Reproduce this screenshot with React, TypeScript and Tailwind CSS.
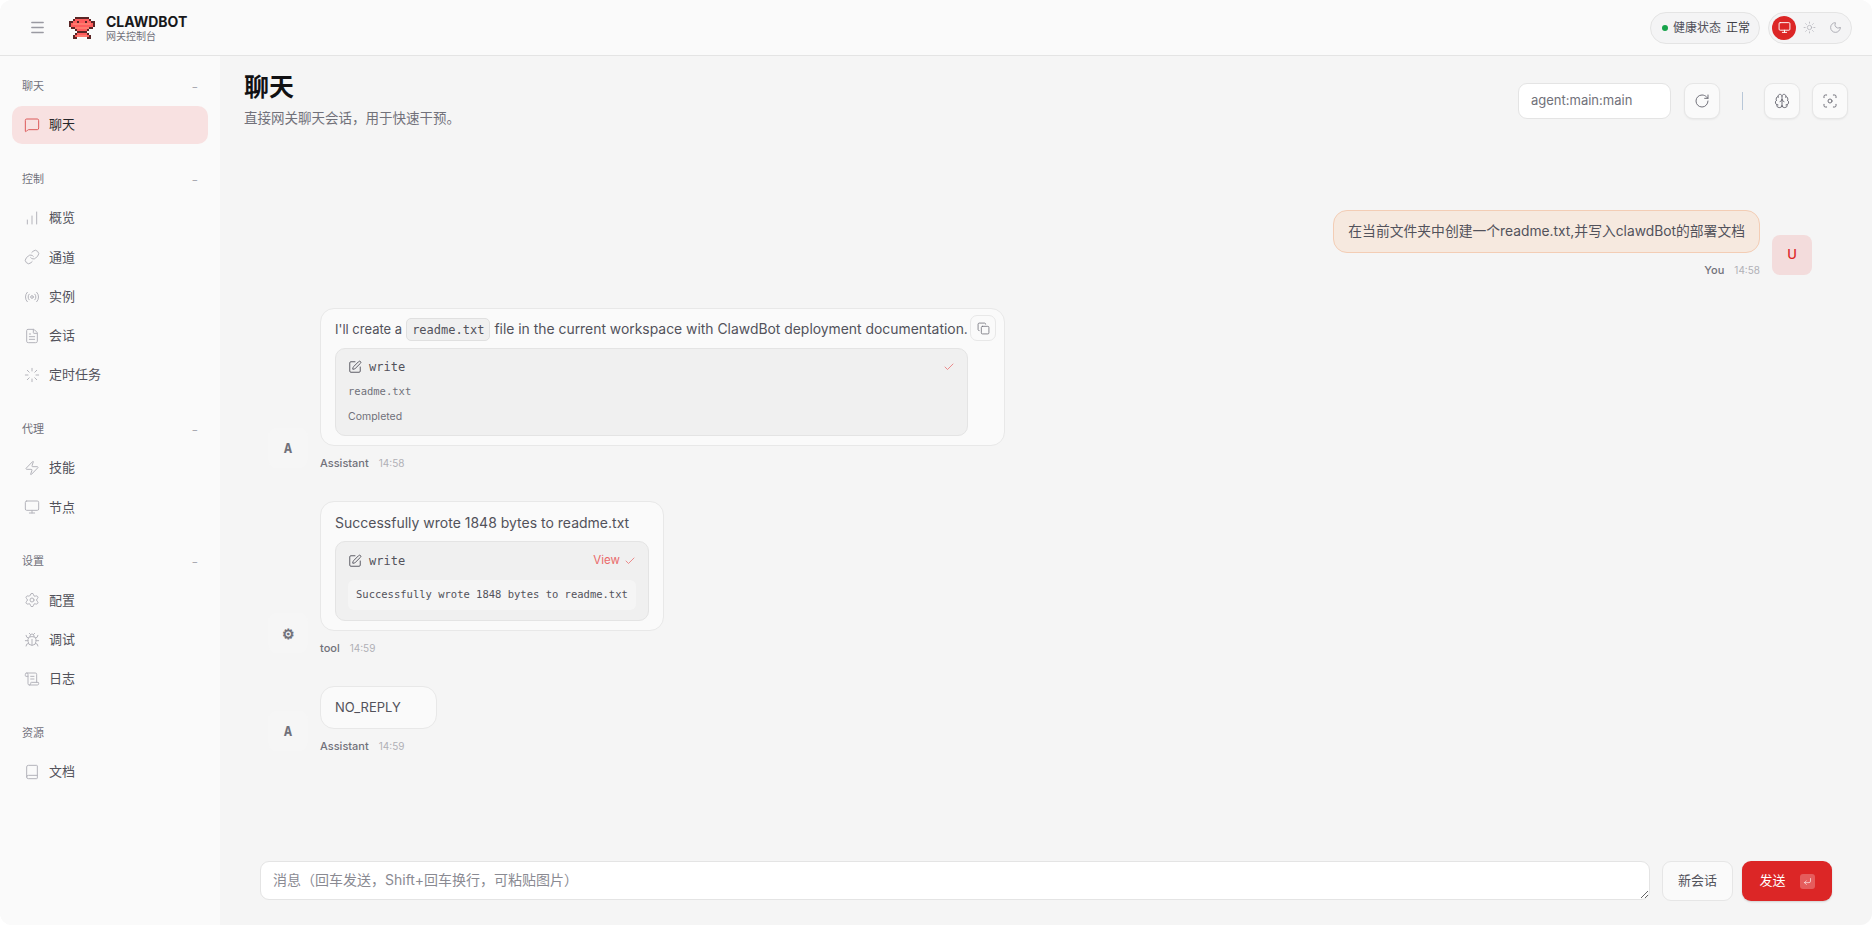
import {
  Book,
  Brain,
  Bug,
  ChartNoAxesColumnIncreasing,
  Check,
  Copy,
  CornerDownLeft,
  FileText,
  Focus,
  Link,
  Loader,
  Menu,
  MessageSquare,
  Monitor,
  Moon,
  Radio,
  RotateCw,
  ScrollText,
  Settings,
  SquarePen,
  Sun,
  Zap,
  type LucideIcon,
} from "lucide-react";
import type { ReactNode } from "react";

const SANS = "font-['Inter','Noto_Sans_CJK_SC',sans-serif]";
const MONO = "font-['DejaVu_Sans_Mono','Noto_Sans_CJK_SC',monospace]";

type NavGroup = {
  label: string;
  collapsible: boolean;
  items: { label: string; icon: LucideIcon; active?: boolean }[];
};

const NAV: NavGroup[] = [
  {
    label: "聊天",
    collapsible: true,
    items: [{ label: "聊天", icon: MessageSquare, active: true }],
  },
  {
    label: "控制",
    collapsible: true,
    items: [
      { label: "概览", icon: ChartNoAxesColumnIncreasing },
      { label: "通道", icon: Link },
      { label: "实例", icon: Radio },
      { label: "会话", icon: FileText },
      { label: "定时任务", icon: Loader },
    ],
  },
  {
    label: "代理",
    collapsible: true,
    items: [
      { label: "技能", icon: Zap },
      { label: "节点", icon: Monitor },
    ],
  },
  {
    label: "设置",
    collapsible: true,
    items: [
      { label: "配置", icon: Settings },
      { label: "调试", icon: Bug },
      { label: "日志", icon: ScrollText },
    ],
  },
  {
    label: "资源",
    collapsible: false,
    items: [{ label: "文档", icon: Book }],
  },
];

// pixel art mascot: d = outline, r = body, l = highlight, e = eye
const LOGO_ROWS = [
  "...ddddddd...",
  "..drrrrrrrd..",
  "ddrrerrrerrdd",
  "drlllllllllrd",
  "drrrrrrrrrrrd",
  ".ddllllllldd.",
  "...drrrrrd...",
  "....ddddd....",
  "...drrrrrd...",
  "..drlllllrd..",
  "..dd.....dd..",
];

const LOGO_COLOR: Record<string, string> = {
  d: "#5a2626",
  r: "#ff5c5c",
  l: "#ff7a6e",
  e: "#5a2626",
};

function Logo() {
  return (
    <svg width="26" height="24" viewBox="0 0 13 11" shapeRendering="crispEdges">
      {LOGO_ROWS.flatMap((row, y) =>
        row.split("").map((c, x) =>
          c === "." ? null : <rect key={`${x}-${y}`} x={x} y={y} width="1" height="1" fill={LOGO_COLOR[c]} />,
        ),
      )}
    </svg>
  );
}

function TopBar() {
  return (
    <header className="flex h-[56px] shrink-0 items-center border-b border-[#e4e4e4] bg-[#fafafa] pl-[29px] pr-[20px]">
      <Menu size={17} strokeWidth={2} className="text-[#9a9aa2]" />
      <div className="ml-[23px]">
        <Logo />
      </div>
      <div className="ml-[11px] flex flex-col">
        <span className="text-[14px] font-bold leading-[17px] text-[#18181b]">CLAWDBOT</span>
        <span className="text-[10px] leading-[12px] text-[#71717a]">网关控制台</span>
      </div>
      <div className="ml-auto flex items-center gap-[8px]">
        <div className="flex h-[32px] w-[110px] items-center rounded-full border border-[#e4e4e4] bg-[#f4f4f5] pl-[11px]">
          <span className="h-[6px] w-[6px] rounded-full bg-[#16a34a]" />
          <span className="ml-[5px] text-[12px] text-[#52525b]">健康状态</span>
          <span className="ml-[5px] text-[12px] text-[#3f3f46]">正常</span>
        </div>
        <div className="flex h-[32px] w-[84px] items-center rounded-full border border-[#e4e4e4] bg-[#f4f4f5] pl-[3px]">
          <span className="flex h-[24px] w-[24px] items-center justify-center rounded-full bg-[#dc2626] text-white">
            <Monitor size={13} strokeWidth={1.75} />
          </span>
          <Sun size={13} strokeWidth={1.5} className="ml-[7px] text-[#b4b4bb]" />
          <Moon size={13} strokeWidth={1.5} className="ml-[13px] text-[#a1a1aa]" />
        </div>
      </div>
    </header>
  );
}

function Sidebar() {
  return (
    <aside className="flex w-[220px] shrink-0 flex-col bg-[#fafafa] pl-[12px] pr-[12px] pt-[21px]">
      {NAV.map((group) => (
        <section key={group.label} className="mb-[26px]">
          <div className="mb-[11px] flex h-[18px] items-center justify-between pl-[10px] pr-[10px]">
            <span className="text-[11px] text-[#71717a]">{group.label}</span>
            {group.collapsible && <span className="text-[10px] text-[#a1a1aa]">−</span>}
          </div>
          <nav className="flex flex-col gap-[1.25px]">
            {group.items.map((item) => {
              const Icon = item.icon;
              return (
                <div
                  key={item.label}
                  className={
                    item.active
                      ? "flex h-[38px] items-center gap-[9px] rounded-[10px] bg-[#f8e1e1] pl-[12px] text-[#27272a]"
                      : "flex h-[38px] items-center gap-[9px] rounded-[10px] pl-[12px] text-[#52525b]"
                  }
                >
                  <Icon
                    size={16}
                    strokeWidth={1.5}
                    className={item.active ? "text-[#dc5a5a]" : "text-[#b4b4bb]"}
                  />
                  <span className="text-[13px]">{item.label}</span>
                </div>
              );
            })}
          </nav>
        </section>
      ))}
    </aside>
  );
}

function IconButton({ icon: Icon }: { icon: LucideIcon }) {
  return (
    <button
      type="button"
      className="flex h-[36px] w-[36px] items-center justify-center rounded-[9px] border border-[#e6e6e6] bg-[#fafafa] text-[#71717a] shadow-[0_1px_2px_rgba(0,0,0,0.05)]"
    >
      <Icon size={16} strokeWidth={1.5} />
    </button>
  );
}

function PageHeader() {
  return (
    <div className="flex shrink-0 items-center justify-between pl-[24px] pr-[24px] pt-[15px]">
      <div>
        <h1 className="text-[25px] font-bold leading-[32px] text-[#111113]">聊天</h1>
        <p className="mt-[5px] pb-[1px] text-[13.5px] leading-[20px] text-[#71717a]">直接网关聊天会话，用于快速干预。</p>
      </div>
      <div className="mt-[2px] flex items-center">
        <div className="flex h-[36px] w-[153px] items-center rounded-[9px] border border-[#e4e4e4] bg-white pl-[12px] text-[13px] text-[#71717a]">
          agent:main:main
        </div>
        <div className="ml-[13px]">
          <IconButton icon={RotateCw} />
        </div>
        <span className="ml-[22px] h-[18px] w-px bg-[#b8c7d8]" />
        <div className="ml-[21px]">
          <IconButton icon={Brain} />
        </div>
        <div className="ml-[12px]">
          <IconButton icon={Focus} />
        </div>
      </div>
    </div>
  );
}

function Avatar({ children, user }: { children: ReactNode; user?: boolean }) {
  return (
    <div
      className={
        user
          ? "mb-[2px] flex h-[40px] w-[40px] shrink-0 items-center justify-center rounded-[8px] bg-[#f3dcdc] text-[13px] font-medium text-[#dc2626]"
          : "mb-[2px] flex h-[40px] w-[40px] shrink-0 items-center justify-center rounded-[8px] bg-[#f6f6f6] text-[14px] font-bold text-[#71717a]"
      }
    >
      {children}
    </div>
  );
}

function Meta({ name, time }: { name: string; time: string }) {
  return (
    <div className="mt-[10px] flex h-[14px] items-center gap-[10px] text-[11px]">
      <span className="font-medium text-[#71717a]">{name}</span>
      <span className="text-[10px] text-[#b0b0b6]">{time}</span>
    </div>
  );
}

function Bubble({ width, children }: { width: string; children: ReactNode }) {
  return (
    <div className={`relative rounded-[14px] border border-[#e8e8e8] bg-[#fafafa] px-[14px] ${width}`}>{children}</div>
  );
}

function ToolHead({ view }: { view?: boolean }) {
  return (
    <div className="flex items-center justify-between">
      <div className="flex items-center gap-[7px] text-[#52525b]">
        <SquarePen size={14} strokeWidth={1.6} />
        <span className={`${MONO} text-[12px] font-medium`}>write</span>
      </div>
      <div className="flex items-center gap-[4px] text-[11.5px] text-[#ea6a6a]">
        {view && <span>View</span>}
        <Check size={12} strokeWidth={1.5} />
      </div>
    </div>
  );
}

function Thread() {
  return (
    <div className="flex min-h-0 flex-1 flex-col gap-[31px] overflow-hidden pl-[48px] pr-[60px] pt-[81px]">
      <div className="flex items-end justify-end gap-[12px]">
        <div className="flex flex-col items-end">
          <div className="flex h-[43px] items-center rounded-[14px] border border-[#f3cdb5] bg-[#f6e9df] px-[14px] text-[13.8px] text-[#52525b]">
            在当前文件夹中创建一个readme.txt,并写入clawdBot的部署文档
          </div>
          <Meta name="You" time="14:58" />
        </div>
        <Avatar user>U</Avatar>
      </div>

      <div className="flex items-end gap-[12px]">
        <Avatar>
          <span className={MONO}>A</span>
        </Avatar>
        <div className="flex flex-col">
          <Bubble width="w-[685px] h-[138px]">
            <div className="flex h-[39px] items-center whitespace-nowrap pt-[2px] text-[13.9px] text-[#52525b]">
              <span className="text-[13px]">I'll create a</span>
              <code className={`${MONO} mx-[4px] flex h-[23px] items-center rounded-[5px] border border-[#e0e0e0] bg-[#f0f0f0] px-[5px] text-[12px]`}>
                readme.txt
              </code>
              file in the current workspace with ClawdBot deployment documentation.
            </div>
            <div className="h-[88px] w-[633px] rounded-[10px] border border-[#e4e4e4] bg-[#f0f0f0] px-[12px] pt-[9px]">
              <ToolHead />
              <div className={`${MONO} mt-[7px] text-[10.5px] leading-[16px] text-[#71717a]`}>readme.txt</div>
              <div className="mt-[10px] text-[10.5px] leading-[16px] text-[#71717a]">Completed</div>
            </div>
            <button
              type="button"
              className="absolute right-[8px] top-[6px] flex h-[26px] w-[26px] items-center justify-center rounded-[7px] border border-[#e8e8e8] bg-[#fafafa] text-[#71717a]"
            >
              <Copy size={13} strokeWidth={1.5} />
            </button>
          </Bubble>
          <Meta name="Assistant" time="14:58" />
        </div>
      </div>

      <div className="flex items-end gap-[12px]">
        <Avatar>
          <span className="text-[14px]">⚙</span>
        </Avatar>
        <div className="flex flex-col">
          <Bubble width="w-[344px] h-[130px]">
            <div className="flex h-[39px] items-center whitespace-nowrap pt-[2px] text-[14px] text-[#52525b]">
              Successfully wrote 1848 bytes to readme.txt
            </div>
            <div className="h-[80px] w-[314px] rounded-[10px] border border-[#e4e4e4] bg-[#f0f0f0] px-[12px] pt-[10px]">
              <ToolHead view />
              <div className={`${MONO} mt-[10px] flex h-[30px] items-center whitespace-nowrap rounded-[6px] bg-[#f5f5f5] pl-[8px] text-[10.5px] text-[#52525b]`}>
                Successfully wrote 1848 bytes to readme.txt
              </div>
            </div>
          </Bubble>
          <Meta name="tool" time="14:59" />
        </div>
      </div>

      <div className="flex items-end gap-[12px]">
        <Avatar>
          <span className={MONO}>A</span>
        </Avatar>
        <div className="flex flex-col">
          <Bubble width="w-[117px] h-[43px]">
            <div className="flex h-[41px] items-center text-[13px] text-[#52525b]">NO_REPLY</div>
          </Bubble>
          <Meta name="Assistant" time="14:59" />
        </div>
      </div>
    </div>
  );
}

function Composer() {
  return (
    <div className="flex shrink-0 items-start gap-[12px] pb-[24px] pl-[40px] pr-[40px]">
      <textarea
        rows={1}
        placeholder="消息（回车发送，Shift+回车换行，可粘贴图片）"
        className="h-[39px] min-w-0 flex-1 rounded-[9px] border border-[#e4e4e4] bg-white px-[12px] py-[8px] text-[14px] leading-[20px] text-[#52525b] outline-none placeholder:text-[#8a8a92]"
      />
      <div className="flex items-center gap-[9px]">
        <button
          type="button"
          className="flex h-[40px] w-[71px] items-center justify-center rounded-[9px] border border-[#e6e6e6] bg-[#fafafa] text-[13px] text-[#52525b]"
        >
          新会话
        </button>
        <button
          type="button"
          className="flex h-[40px] w-[90px] items-center justify-center gap-[14px] rounded-[9px] bg-[#dc2626] text-[13px] text-white shadow-[0_1px_2px_rgba(0,0,0,0.15)]"
        >
          发送
          <span className="flex h-[15px] w-[15px] items-center justify-center rounded-[3px] bg-white/25 text-white/80">
            <CornerDownLeft size={9} strokeWidth={2} />
          </span>
        </button>
      </div>
    </div>
  );
}

export default function App() {
  return (
    <div className={`${SANS} flex h-screen w-full flex-col overflow-hidden rounded-[12px] bg-[#fafafa]`}>
      <TopBar />
      <div className="flex min-h-0 flex-1">
        <Sidebar />
        <main className="flex min-w-0 flex-1 flex-col bg-[#f5f5f5]">
          <PageHeader />
          <Thread />
          <Composer />
        </main>
      </div>
    </div>
  );
}
